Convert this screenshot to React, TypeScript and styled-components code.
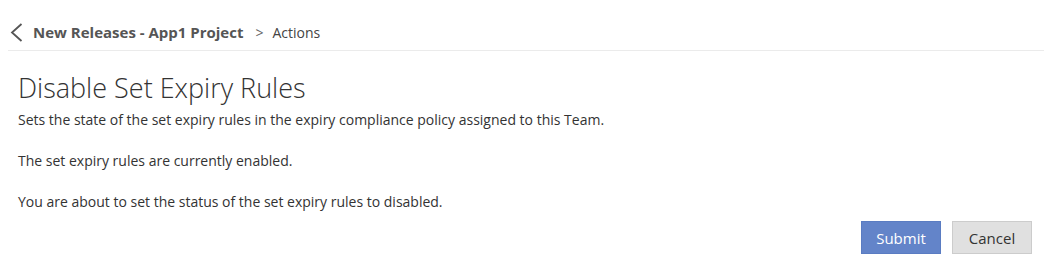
import React from "react";
import styled, { createGlobalStyle } from "styled-components";

const GlobalStyle = createGlobalStyle`
  body {
    margin: 0;
    background: #fff;
    font-family: "Open Sans", "Liberation Sans", sans-serif;
    color: #333;
  }
`;

export default function App() {
  return (
    <>
      <GlobalStyle />
      <Page>
        <Header>
          <BackButton aria-label="Back">
            <svg width="13" height="19" viewBox="0 0 13 19">
              <path d="M11.5 1 L2 9.5 L11.5 18" fill="none" stroke="#555" strokeWidth="1.8" />
            </svg>
          </BackButton>
          <Crumb>New Releases - App1 Project</Crumb>
          <Separator>&gt;</Separator>
          <Current>Actions</Current>
        </Header>
        <Content>
          <Title>Disable Set Expiry Rules</Title>
          <Text>Sets the state of the set expiry rules in the expiry compliance policy assigned to this Team.</Text>
          <Text $gap>The set expiry rules are currently enabled.</Text>
          <Text $gap>You are about to set the status of the set expiry rules to disabled.</Text>
          <Actions>
            <Button $primary>Submit</Button>
            <Button>Cancel</Button>
          </Actions>
        </Content>
      </Page>
    </>
  );
}

const Page = styled.div`
  width: 1045px;
  height: 266px;
  overflow: hidden;
`;

const Header = styled.div`
  display: flex;
  align-items: center;
  height: 36px;
  padding: 14px 0 0 2px;
  margin: 0 1px 0 8px;
  border-bottom: 1px solid #ebebeb;
`;

const BackButton = styled.span`
  display: flex;
  align-items: center;
  margin-right: 10px;
`;

const Crumb = styled.span`
  font-size: 15px;
  font-weight: 700;
  color: #555;
`;

const Separator = styled.span`
  margin: 0 9px 0 12px;
  font-size: 14px;
  color: #666;
`;

const Current = styled.span`
  font-size: 14px;
  color: #444;
`;

const Content = styled.div`
  padding: 20px 13px 0 18px;
`;

const Title = styled.h1`
  margin: 0 0 5px;
  font-size: 27px;
  font-weight: 300;
  line-height: 34px;
  color: #333;
`;

const Text = styled.p<{ $gap?: boolean }>`
  margin: ${(p) => (p.$gap ? "21px" : "0")} 0 0;
  font-size: 14px;
  line-height: 20px;
  color: #333;
`;

const Actions = styled.div`
  display: flex;
  justify-content: flex-end;
  gap: 11px;
  margin-top: 9px;
`;

const Button = styled.button<{ $primary?: boolean }>`
  width: 80px;
  height: 33px;
  font-family: "Open Sans", "Liberation Sans", sans-serif;
  font-size: 15px;
  border: 1px solid ${(p) => (p.$primary ? "#5a7cc2" : "#cccccc")};
  background: ${(p) => (p.$primary ? "#6384c9" : "#e0e0e0")};
  color: ${(p) => (p.$primary ? "#fff" : "#333")};
  cursor: pointer;
`;
